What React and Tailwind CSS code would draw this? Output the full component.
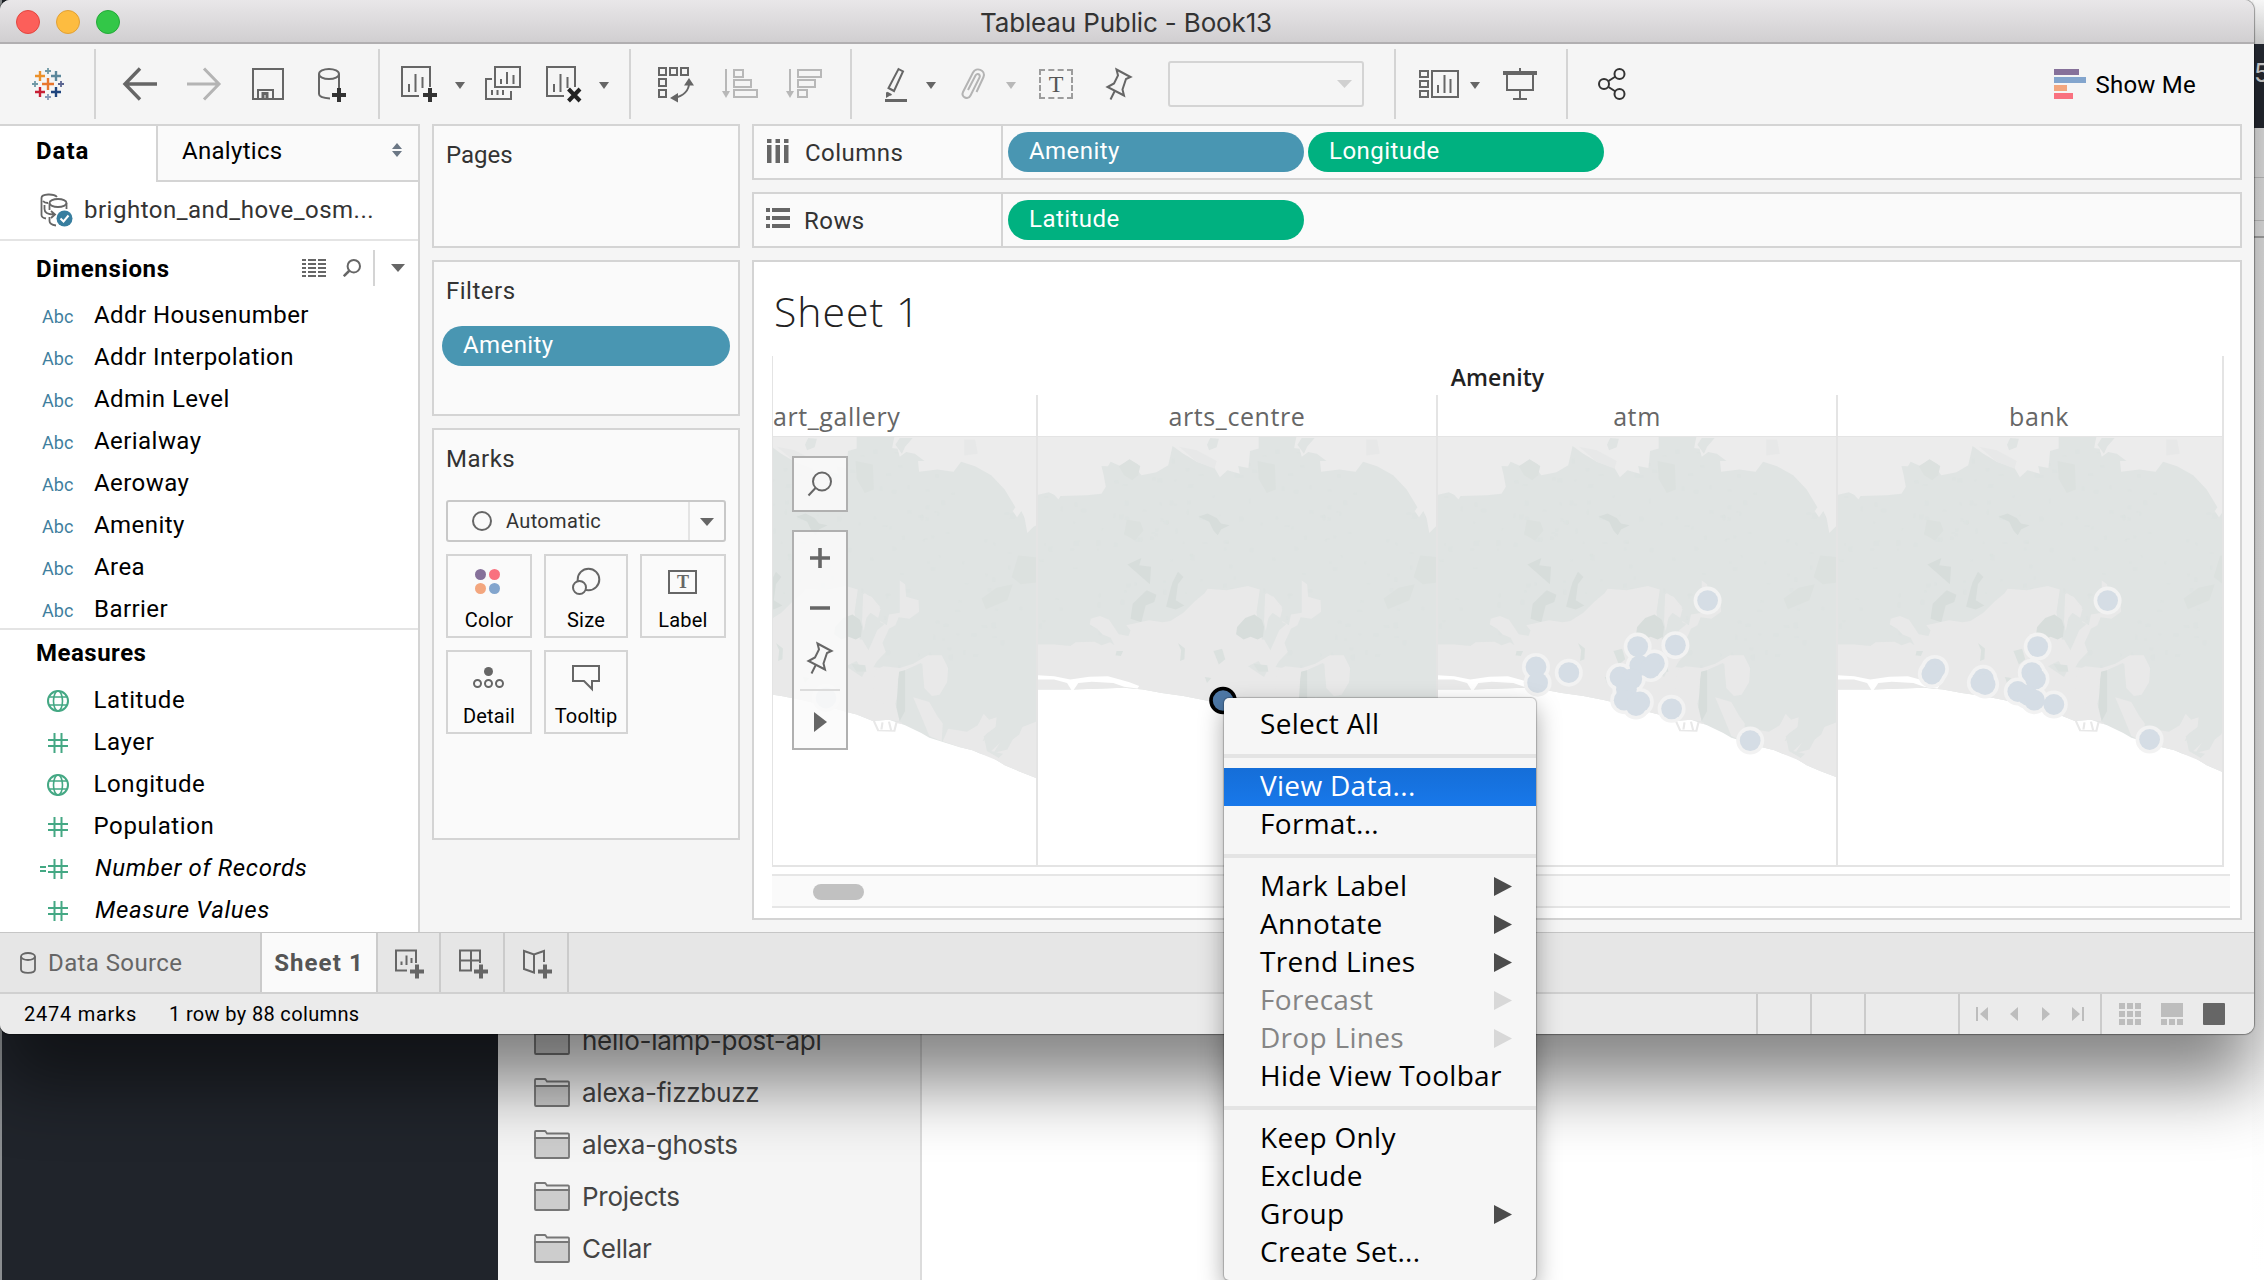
import React from "react";

/* ---------- toolbar icons (each drawn in a 40px tall box) ---------- */

function Icon({ w, className = "", stroke = "#666", sw = 2, children }) {
  return (
    <svg
      width={w}
      height="40"
      viewBox={`0 0 ${w} 40`}
      fill="none"
      stroke={stroke}
      strokeWidth={sw}
      className={`shrink-0 overflow-visible ${className}`}
    >
      {children}
    </svg>
  );
}

function Caret({ className = "", fill = "#666" }) {
  return (
    <svg width="10" height="7" viewBox="0 0 10 7" className={`mt-[2px] shrink-0 ${className}`}>
      <path d="M0 0H10L5 7Z" fill={fill} />
    </svg>
  );
}

const Sep = ({ className = "" }) => (
  <div className={`h-[70px] w-[2px] shrink-0 bg-[#d4d4d4] ${className}`} />
);

const Plus = ({ x, y, s, c, w = 2.4 }) => (
  <path d={`M${x - s} ${y}H${x + s}M${x} ${y - s}V${y + s}`} stroke={c} strokeWidth={w} />
);

const SheetShape = () => (
  <>
    <path d="M30 23V3H2V32H19" />
    <path d="M9 28V20M15.500 28V10M22.500 24V13" />
  </>
);

const PIN = "M10.500 5.500L24.500 13L20 15L16.500 25.500L18 31.500L1.500 23L8 19.500L12 11.500ZM8.500 27.500L4.500 35.500";

function Toolbar() {
  return (
    <div className="flex h-20 shrink-0 items-center bg-[#f5f5f5]">
      <Icon w={32} className="ml-8">
        <Plus x={16} y={20} s={6} c="#e8762d" />
        <Plus x={8} y={12} s={5} c="#eb912b" />
        <Plus x={24} y={12} s={5} c="#5b879b" />
        <Plus x={8} y={28} s={5} c="#c72035" />
        <Plus x={24} y={28} s={5} c="#1f457e" />
        <Plus x={16} y={7} s={3} c="#7199a6" w={1.8} />
        <Plus x={3} y={20} s={3} c="#7199a6" w={1.8} />
        <Plus x={29} y={20} s={3} c="#5b6591" w={1.8} />
        <Plus x={16} y={33} s={3} c="#8398b8" w={1.8} />
      </Icon>
      <Sep className="ml-[30px]" />
      <Icon w={34} className="ml-[27px]" sw={3.4}>
        <path d="M34 20H2M17 4.500L2 20L17 35.500" />
      </Icon>
      <Icon w={34} className="ml-[30px]" sw={3} stroke="#b4b4b4">
        <path d="M0 20H32M17 4.500L32 20L17 35.500" />
      </Icon>
      <Icon w={32} className="ml-[31px]">
        <path d="M1 5H31V35H1ZM6 35V26H21V35" />
        <path d="M11 35V29.500H15V35" strokeWidth="3" />
      </Icon>
      <Icon w={30} className="ml-[34px]">
        <ellipse cx="11" cy="10" rx="10" ry="5" />
        <path d="M1 10V30C1 32.500 5 34 12 34.500M21 10V25" />
        <path d="M14 31H28M21 24V38" stroke="#333" strokeWidth="4" />
      </Icon>
      <Sep className="ml-[30px]" />
      <Icon w={38} className="ml-5">
        <SheetShape />
        <path d="M23 31H37M30 24V38" stroke="#333" strokeWidth="4" />
      </Icon>
      <Caret className="ml-[17px]" />
      <Icon w={36} className="ml-5">
        <path d="M10 3H35V23H10ZM16 20V15M22 20V8M28.500 20V11" />
        <path d="M7 15H1V35H26V27M7 31V26M12.500 31V26M18 31V26" />
      </Icon>
      <Icon w={36} className="ml-6">
        <SheetShape />
        <path d="M23.500 25L35 37M35 25L23.500 37" stroke="#222" strokeWidth="4" />
      </Icon>
      <Caret className="ml-[18px]" />
      <Sep className="ml-5" />
      <Icon w={36} className="ml-[27px]">
        <path d="M1 4H8V11H1ZM12 4H19V11H12ZM23 4H30V11H23ZM1 15H8V22H1ZM1 26H8V33H1Z" />
        <path d="M16 34C26 32 31 26 31 19" />
        <path d="M26 21.500L31 14L36 21.500ZM20 29L12 34L20 38.500Z" fill="#666" stroke="none" />
      </Icon>
      <Icon w={36} className="ml-7" stroke="#b8b8b8">
        <path d="M4 5V30M12 6H21V13H12ZM12 16H29V23H12ZM12 26H35V33H12Z" />
        <path d="M0 27H8L4 34Z" fill="#b8b8b8" stroke="none" />
      </Icon>
      <Icon w={36} className="ml-7" stroke="#b8b8b8">
        <path d="M4 5V30M12 6H35V13H12ZM12 16H29V23H12ZM12 26H21V33H12Z" />
        <path d="M0 27H8L4 34Z" fill="#b8b8b8" stroke="none" />
      </Icon>
      <Sep className="ml-7" />
      <Icon w={24} className="ml-[33px]">
        <path d="M13.500 5L18 7.500L9 27L3.500 24ZM2 28.500L6.500 31" />
        <path d="M0 36.500H22" strokeWidth="3" />
        <path d="M1 28L6 31L1 34Z" fill="#666" stroke="none" />
      </Icon>
      <Caret className="ml-[17px]" />
      <Icon w={24} className="ml-[25px]" stroke="#b4b4b4">
        <path d="M7 26L14.500 11.500C16 8.500 20 10.500 18.500 13.500L9.500 31.500C7 36.500 -0.500 33 2 28L12 8.500C15 2.500 25 6 22.500 13L15.500 28" />
      </Icon>
      <Caret className="ml-[21px]" fill="#b8b8b8" />
      <div className="ml-[23px] flex h-[30px] w-[34px] shrink-0 items-center justify-center border-2 border-dashed border-[#9c9c9c] font-['Liberation_Serif',serif] text-[24px] leading-none text-[#555]">
        T
      </div>
      <Icon w={26} className="ml-[33px]">
        <path d={PIN} />
      </Icon>
      <div className="ml-9 flex h-[46px] w-[196px] shrink-0 items-center justify-end rounded-[3px] border-2 border-[#d4d4d4] pr-[10px]">
        <svg width="15" height="8" viewBox="0 0 15 8">
          <path d="M0 0H15L7.500 8Z" fill="#d0d0d0" />
        </svg>
      </div>
      <Sep className="ml-[30px]" />
      <Icon w={40} className="ml-[23px]">
        <path d="M1 7H9V13H1ZM1 17H9V23H1ZM1 27H9V33H1ZM13 7H39V33H13ZM19 29V21M25.500 29V11M31.500 29V15" />
      </Icon>
      <Caret className="ml-[11px]" />
      <Icon w={34} className="ml-[23px]">
        <path d="M17 4V8M4 10V26H30V10M17 26V35M10 35H24" />
        <path d="M0 9H34" strokeWidth="4" />
      </Icon>
      <Sep className="ml-[29px]" />
      <Icon w={28} className="ml-[30px]" stroke="#333">
        <circle cx="21.500" cy="10" r="5" />
        <circle cx="6" cy="20" r="5" />
        <circle cx="21.500" cy="30" r="5" />
        <path d="M10.500 17L17.500 12.500M10.500 23L17.500 27.500" />
      </Icon>
      <div className="mr-[58px] ml-auto flex items-center">
        <div className="mr-[9px] flex w-8 flex-col gap-[2px]">
          <div className="h-[6px] w-[25px] bg-[#86719a]" />
          <div className="h-[6px] w-8 bg-[#83a5cd]" />
          <div className="h-[6px] w-[13px] bg-[#f3a67e]" />
          <div className="h-[6px] w-[19px] bg-[#f9717f]" />
        </div>
        <span className="pt-px text-[24px] leading-8 tracking-[0.25px] text-black">Show Me</span>
      </div>
    </div>
  );
}

/* ---------- left data pane ---------- */

const DIMENSIONS = [
  "Addr Housenumber",
  "Addr Interpolation",
  "Admin Level",
  "Aerialway",
  "Aeroway",
  "Amenity",
  "Area",
  "Barrier",
];

const MEASURES = [
  ["Latitude", "globe"],
  ["Layer", "hash"],
  ["Longitude", "globe"],
  ["Population", "hash"],
  ["Number of Records", "calc"],
  ["Measure Values", "hash-italic"],
];

function MeasureIcon({ kind }) {
  return (
    <svg width="30" height="24" viewBox="0 0 30 24" fill="none" stroke="#44a884" strokeWidth="2" className="mt-[2px] shrink-0">
      {kind === "globe" ? (
        <>
          <circle cx="18" cy="12" r="10" />
          <ellipse cx="18" cy="12" rx="4.500" ry="10" strokeWidth="1.600" />
          <path d="M9 8H27M9 16H27" strokeWidth="1.600" />
        </>
      ) : (
        <path d="M14.500 2V22M21.500 2V22M8 9H28M8 15H28" />
      )}
      {kind === "calc" && <path d="M0 10H6M0 14H6" />}
    </svg>
  );
}

function DataPane() {
  return (
    <div className="flex w-[420px] shrink-0 flex-col border-t-2 border-r-2 border-[#d4d4d4] bg-white text-[24px] text-black">
      <div className="flex h-14 shrink-0">
        <div className="w-[156px] pl-[36px] font-bold leading-[50px] tracking-[1px]">Data</div>
        <div className="flex flex-1 items-start justify-between border-b-2 border-l-2 border-[#d4d4d4] bg-[#fafafa] pr-4 pl-6 leading-[51px] tracking-[0.3px]">
          Analytics
          <svg width="10" height="14" viewBox="0 0 10 14" className="mt-[17px]">
            <path d="M0 6L5 0L10 6ZM0 8H10L5 14Z" fill="#6b7785" />
          </svg>
        </div>
      </div>
      <div className="flex h-[59px] shrink-0 items-center border-b-2 border-[#e4e4e4] pl-10">
        <svg width="34" height="34" viewBox="0 0 34 34" fill="none" stroke="#666" strokeWidth="1.800" className="mr-[10px] mb-[2px]">
          <path d="M17 4C14 0.500 1.500 0.500 1.500 5V22C1.500 24 3 25 6 25.500" />
          <path d="M3 8C4 9.500 6 10 8 10" />
          <ellipse cx="18" cy="10" rx="8.500" ry="4" />
          <path d="M9.500 10V17M26.500 10V16M9.500 24V28C9.500 31 12 32 16 32.500" />
          <path d="M4.500 12V16C4.500 20 8 21.500 14 21.500M11 18L15 21.500L11 25" />
          <circle cx="24.500" cy="25.500" r="8" fill="#377e9f" stroke="none" />
          <path d="M20.500 25.500L23.500 28.500L28.500 22.500" stroke="#fff" strokeWidth="2" />
        </svg>
        <span className="mb-[2px] leading-[54px] tracking-[0.5px] text-[#333]">brighton_and_hove_osm...</span>
      </div>
      <div className="h-[387px] shrink-0 overflow-hidden">
        <div className="flex h-[54px] items-center pr-[13px] pl-9">
          <span className="flex-1 pt-px font-bold tracking-[0.65px]">Dimensions</span>
          <svg width="24" height="18" viewBox="0 0 24 18" className="mr-[17px]">
            {[0, 4, 8, 12, 16].map((y) => (
              <path key={y} d={`M0 ${y + 1}H4M6 ${y + 1}H14M16 ${y + 1}H24`} stroke="#666" strokeWidth="2" />
            ))}
          </svg>
          <svg width="18" height="18" viewBox="0 0 18 18" fill="none" stroke="#666" strokeWidth="2" className="mr-3">
            <circle cx="10.800" cy="7.200" r="6.200" />
            <path d="M6.500 11.500L0.800 17.200" strokeWidth="2.500" />
          </svg>
          <div className="mr-4 h-9 w-[2px] bg-[#d4d4d4]" />
          <svg width="14" height="8" viewBox="0 0 14 8">
            <path d="M0 0H14L7 8Z" fill="#666" />
          </svg>
        </div>
        {DIMENSIONS.map((d) => (
          <div key={d} className="flex h-[42px] items-baseline leading-[41px]">
            <span className="w-[94px] shrink-0 pl-[42px] text-[18px] tracking-[0.1px] text-[#3f7f9e]">Abc</span>
            <span className="tracking-[0.44px]">{d}</span>
          </div>
        ))}
      </div>
      <div className="flex-1 overflow-hidden border-t-2 border-[#e4e4e4]">
        <div className="h-[49px] pl-9 font-bold leading-[46px] tracking-[0.5px]">Measures</div>
        {MEASURES.map(([name, kind]) => (
          <div key={name} className="flex h-[42px] items-center pl-10">
            <MeasureIcon kind={kind} />
            <span
              className={
                kind === "calc" || kind === "hash-italic"
                  ? "pl-[25px] italic leading-[42px] tracking-[0.65px]"
                  : "pl-[23.500px] leading-[42px] tracking-[0.6px]"
              }
            >
              {name}
            </span>
          </div>
        ))}
      </div>
    </div>
  );
}

/* ---------- cards column ---------- */

const Card = ({ className = "", title, titleClass, children }) => (
  <div className={`shrink-0 border-2 border-[#d4d4d4] bg-[#fafafa] ${className}`}>
    <div className={`pl-3 text-[24px] text-[#333] ${titleClass}`}>{title}</div>
    {children}
  </div>
);

const MARK_ICONS = {
  Color: (
    <g stroke="none">
      <circle cx="11.500" cy="18.500" r="5.500" fill="#86719a" />
      <circle cx="25.500" cy="18.500" r="5.500" fill="#f9717f" />
      <circle cx="11.500" cy="32.500" r="5.500" fill="#f3a67e" />
      <circle cx="25.500" cy="32.500" r="5.500" fill="#83a5cd" />
    </g>
  ),
  Size: (
    <>
      <circle cx="22.500" cy="23.500" r="10.800" />
      <circle cx="13.500" cy="31.500" r="6.500" fill="#fafafa" />
    </>
  ),
  Label: <path d="M6 15H33V37H6Z" />,
  Detail: (
    <>
      <circle cx="19.500" cy="19.500" r="4.500" fill="#666" stroke="none" />
      <circle cx="8.500" cy="31.500" r="3.500" />
      <circle cx="19.500" cy="31.500" r="3.500" />
      <circle cx="30.500" cy="31.500" r="3.500" />
    </>
  ),
  Tooltip: <path d="M7 14H33V29H26V37L18 29H7Z" />,
};

function MarkButton({ name, className }) {
  return (
    <div className={`relative flex h-[84px] flex-col items-center border-2 border-[#d4d4d4] bg-[#fafafa] ${className}`}>
      <svg width="40" height="52" viewBox="0 0 40 52" fill="none" stroke="#666" strokeWidth="2">
        {MARK_ICONS[name]}
      </svg>
      {name === "Label" && (
        <span className="absolute top-[16px] font-['Liberation_Serif',serif] text-[18px] font-bold leading-[20px] text-[#666]">T</span>
      )}
      <span className="text-[20px] leading-[25px] tracking-[0.2px] text-black">{name}</span>
    </div>
  );
}

function Cards() {
  return (
    <div className="ml-3 flex w-[308px] shrink-0 flex-col gap-3">
      <Card className="h-[124px]" title="Pages" titleClass="leading-[58px]" />
      <Card className="h-[156px]" title="Filters" titleClass="h-16 leading-[59px] tracking-[0.5px]">
        <div className="mx-2 h-10 rounded-full bg-[#4996b2] pl-[21px] text-[24px] leading-[39px] tracking-[0.4px] text-white">
          Amenity
        </div>
      </Card>
      <Card className="h-[412px]" title="Marks" titleClass="h-[70px] leading-[59px] tracking-[0.5px]">
        <div className="mx-3 flex h-[42px] items-center rounded-[3px] border-2 border-[#c8c8c8]">
          <svg width="20" height="20" viewBox="0 0 20 20" className="ml-6">
            <circle cx="10" cy="10" r="9" fill="none" stroke="#666" strokeWidth="2" />
          </svg>
          <span className="flex-1 pl-[14px] text-[20px] tracking-[0.35px] text-[#333]">Automatic</span>
          <div className="flex h-full w-[36px] items-center justify-center border-l-2 border-[#e4e4e4]">
            <svg width="14" height="8" viewBox="0 0 14 8" className="mt-[2px]">
              <path d="M0 0H14L7 8Z" fill="#666" />
            </svg>
          </div>
        </div>
        <div className="mx-3 mt-3 flex flex-wrap gap-y-3">
          <MarkButton name="Color" className="w-[86px]" />
          <MarkButton name="Size" className="ml-3 w-[84px]" />
          <MarkButton name="Label" className="ml-3 w-[86px]" />
          <MarkButton name="Detail" className="w-[86px]" />
          <MarkButton name="Tooltip" className="ml-3 w-[84px]" />
        </div>
      </Card>
    </div>
  );
}

/* ---------- shelves ---------- */

const Pill = ({ color, children }) => (
  <div className={`h-10 w-[296px] rounded-full pl-[21px] text-[24px] leading-[39px] tracking-[0.45px] text-white ${color}`}>
    {children}
  </div>
);

const Shelf = ({ icon, label, children }) => (
  <div className="flex h-14 shrink-0 border-2 border-[#d4d4d4] bg-[#fafafa]">
    <div className="flex w-[249px] items-center border-r-2 border-[#d4d4d4]">
      {icon}
      <span className="pt-px text-[24px] tracking-[0.45px] text-[#333]">{label}</span>
    </div>
    <div className="flex items-center gap-1 pl-[5px]">{children}</div>
  </div>
);

/* ---------- map ---------- */

function seeded(seed) {
  let s = seed;
  return () => {
    s = (s * 16807) % 2147483647;
    return s / 2147483647;
  };
}

const rnd = seeded(42);
const SPECKS = Array.from({ length: 240 }, () => ({
  x: 32 + rnd() * 735,
  y: 500 + rnd() * 640,
  w: 3 + rnd() * 7,
  h: 4 + rnd() * 12,
}));

const LAND = "#e0e4e3";
const URBAN = "#e9e9e9";
const PALE = "#ececec";
const WOOD = "#d7dddb";

function MapTile() {
  return (
    <svg width="400" height="430" viewBox="30 493 743.200 1204" preserveAspectRatio="none" className="block shrink-0">
      <rect x="30" y="493" width="744" height="1204" fill="#fff" />
      <path
        fill={LAND}
        d="M30 493H774V1448L740 1428L715 1412L700 1398L690 1388L670 1380L655 1370L632 1362L606 1350L590 1342L575 1335L560 1322L530 1300L500 1285L470 1288L440 1270L420 1262L380 1245L340 1230L300 1218L260 1210L225 1200L190 1195L95 1200L30 1200Z"
      />
      {SPECKS.map((s, i) => (
        <rect key={i} x={s.x} y={s.y} width={s.w} height={s.h} rx="2" fill="#dce2e0" opacity="0.450" />
      ))}
      <path
        fill={PALE}
        d="M30 493H440V525L424 532L421 580L402 574L405 596L382 586L368 606L358 580L325 562L300 540L280 518L272 572L250 592L222 600L214 585L216 570L200 556L184 575L165 562L160 575L148 574L152 600L156 632L148 652L120 656L72 658L68 668L60 655L50 648L30 655Z"
      />
      <path fill={PALE} d="M510 493H774V740L768 745L757 762L752 720L746 700L738 718L730 700L735 690L715 640L690 600L660 575L634 562L620 590L590 584L556 590L554 560L566 560L548 540L532 535L520 548L516 526L506 524Z" />
      <path fill="#e7e8e8" d="M292 520L325 530L362 560L358 582L325 562ZM640 500L660 500L665 540L640 545Z" />
      <path fill={LAND} d="M350 496L366 498L362 522L348 530L344 515ZM520 496H544L530 520L524 540L512 515Z" />
      <path fill="#dce1df" d="M180 575L200 555L220 574L216 600L205 614L190 600ZM195 725L220 730L226 755L210 783L190 765ZM438 560L470 570L472 640L455 650L440 610ZM740 825L774 830V900L745 905L728 885ZM700 915L730 905L720 950L680 975L672 945Z" />
      <path fill={WOOD} d="M328 716L345 707L362 720L370 735L386 740L370 752L364 768L356 755L348 730ZM196 850L222 832L218 852L240 856L238 905ZM232 922L250 935L246 955L230 965L222 1012L202 1002L206 960ZM290 870L300 885L290 905L286 950L302 965L286 976L268 968L276 920L280 900Z" />
      <path
        fill={URBAN}
        d="M30 1074L60 1074L90 1078L100 1068L135 1066L148 1076L164 1068L172 1076L165 1055L150 1046L140 1030L126 1018L128 1002L145 994L162 1005L168 1018L180 1045L198 1050L202 1035L194 1020L236 1006L262 1012L276 1008L300 985L320 955L340 930L345 918L380 922L420 910L442 920L436 985L455 930L470 945L484 970L476 1000L496 1020L500 990L520 985L520 895L530 905L532 940L555 950L556 982L538 1002L518 998L512 1020L500 1030L488 1070L494 1095L478 1120L470 1140L452 1150L440 1120L420 1135L450 1165L460 1135L510 1145L545 1128L572 1104L598 1104L610 1140L608 1180L594 1215L580 1218L565 1195L562 1128L520 1152L518 1200L512 1240L520 1290L500 1285L470 1288L440 1270L420 1262L380 1245L340 1230L300 1218L260 1210L225 1200L190 1195L95 1200L30 1200Z"
      />
      <path fill={LAND} d="M444 920L452 935L450 1010L456 1060L446 1060L436 985ZM484 970L484 1012L492 1016L478 1035L462 1090L450 1060L458 1000L466 985Z" />
      <path fill={URBAN} d="M452 932L468 940L484 975L480 1000L466 985L452 965Z" />
      <path fill={WOOD} d="M400 1025L415 1000L432 990L446 1005L450 1025L448 1052L438 1060L425 1052L412 1060L398 1045ZM518 1150L530 1146L536 1200L530 1260L520 1288L514 1250Z" />
      <path fill={LAND} d="M530 1146L560 1125L566 1200L580 1230L545 1222L552 1255L530 1285Z" />
      <path fill="#dbe1df" d="M290 1070L303 1085L302 1115L294 1120L296 1090ZM176 1092L188 1092L184 1106L174 1104ZM356 1092L372 1086L378 1115L366 1130ZM340 1165L352 1168L344 1182ZM430 1128L456 1132L458 1150L440 1150Z" />
      <path fill={URBAN} d="M490 1135L520 1140L512 1215L490 1240L470 1225L475 1145ZM545 1222L575 1235L590 1275L600 1295L598 1345L575 1330L560 1275ZM600 1345L610 1310L645 1318L665 1300L676 1268L686 1285L700 1278L698 1305L680 1325L674 1345L710 1318L706 1350L694 1378L720 1368L730 1340L742 1326L748 1305L774 1290V1448L740 1428L715 1412L700 1398L655 1370L632 1362Z" />
      <path fill={LAND} d="M676 1330L712 1312L710 1345L690 1372L712 1380L704 1392L682 1372Z" />
      <path fill="#fff" d="M30 1160L60 1163L90 1172L125 1164L160 1163L182 1172L200 1180L218 1190L215 1197L190 1192L170 1182L130 1178L105 1182L94 1206L84 1182L60 1172L30 1172Z" />
      <path d="M472 1288L480 1315L510 1316L514 1292L524 1295M488 1292L486 1312M500 1290L504 1314" fill="none" stroke="#e8e8e8" strokeWidth="4" />
    </svg>
  );
}

const ATM = [
  [269.6, 163.6], [237.4, 208.2], [199.7, 209.6], [216.4, 226.4], [201.8, 228.6], [212.6, 231], [98, 230],
  [99.6, 245.7], [130.8, 235.7], [182, 240], [193.8, 241.8], [188.4, 252.5], [186.2, 263.2], [201.8, 265],
  [198, 268.6], [233.6, 271.8], [312.2, 303.6],
];
const BANK = [
  [269.6, 163.6], [199.7, 209.6], [96.9, 232], [93.9, 237], [145.3, 241.8], [142.9, 245.7], [147.1, 247.5],
  [193.8, 235.7], [197.5, 241.8], [179.8, 254.5], [189.5, 258], [196.4, 263.2], [215.8, 267.5], [311.6, 302.5],
];

function Facet({ marks = [], className = "", children }) {
  return (
    <div className={`relative flex overflow-hidden ${className}`}>
      <MapTile />
      <svg width="400" height="430" viewBox="0 0 400 430" className="absolute top-0 left-0">
        {marks.map(([x, y], i) => (
          <circle key={i} cx={x} cy={y} r="14" fill="#f2f2f2" />
        ))}
        {marks.map(([x, y], i) => (
          <circle key={i} cx={x} cy={y} r="10.400" fill="#d5dde5" />
        ))}
        {children}
      </svg>
    </div>
  );
}

const VLINE = "border-l-2 border-[#e4e4e4]";

function Worksheet() {
  return (
    <div className="flex h-[660px] shrink-0 flex-col border-2 border-[#d4d4d4] bg-white font-['Open_Sans','Noto_Sans',sans-serif]">
      <div className="mt-[19px] h-[75px] pl-[20px] text-[41px] font-light leading-[60px] tracking-[1px] text-[#222]">Sheet 1</div>
      <div className="relative ml-[18px] w-[1452px] shrink-0">
        <div className="h-[39px] border-r-2 border-l border-[#e4e4e4] text-center text-[23px] font-semibold leading-[42px] tracking-[0.1px] text-[#222]">
          Amenity
        </div>
        <div className="flex h-[42px] border-l border-b border-[#e4e4e4] text-[25px] leading-[43px] tracking-[0.6px] text-[#666]">
          <div className="w-[263px]">art_gallery</div>
          <div className={`w-[400px] text-center ${VLINE}`}>arts_centre</div>
          <div className={`w-[400px] text-center ${VLINE}`}>atm</div>
          <div className={`w-[388px] border-r-2 pl-[171px] ${VLINE}`}>bank</div>
        </div>
        <div className="flex h-[430px] border-b-2 border-[#e4e4e4]">
          <div className="flex w-[264px] justify-end overflow-hidden border-l border-[#e4e4e4]">
            <Facet className="w-[400px] shrink-0" marks={[[190, 261]]} />
          </div>
          <Facet className={`w-[400px] ${VLINE}`}>
            <circle cx="185" cy="263.500" r="12" fill="#4e79a7" stroke="#000" strokeWidth="3.600" />
          </Facet>
          <Facet className={`w-[400px] ${VLINE}`} marks={ATM} />
          <Facet className={`w-[388px] border-r-2 ${VLINE}`} marks={BANK} />
        </div>
        <div className="absolute top-[100px] left-5 flex w-14 flex-col gap-[18px]">
          <div className="flex h-14 items-center justify-center border-2 border-[#b0b0b0] bg-[#fafafa]/85">
            <svg width="26" height="26" viewBox="0 0 26 26" fill="none" stroke="#666" strokeWidth="2">
              <circle cx="15" cy="10.500" r="9" />
              <path d="M8.500 17L1.500 24.500" />
            </svg>
          </div>
          <div className="flex h-[220px] flex-col items-center border-2 border-[#b0b0b0] bg-[#fafafa]/85">
            <svg width="52" height="216" viewBox="0 0 52 216" fill="none" stroke="#666">
              <path d="M16 26H36M26 16V36M16 76H36" strokeWidth="3.600" />
              <path d={PIN} transform="translate(13 106)" strokeWidth="2" />
              <path d="M6 158H46" stroke="#dcdcdc" strokeWidth="2" />
              <path d="M20 180L33 190L20 200Z" fill="#666" stroke="none" />
            </svg>
          </div>
        </div>
      </div>
      <div className="mt-[7px] ml-[18px] flex h-[34px] w-[1458px] shrink-0 items-center border-y-2 border-[#e6e6e6] bg-[#fafafa] pl-[41px]">
        <div className="mt-px h-4 w-[51px] rounded-full bg-[#c1c1c1]" />
      </div>
    </div>
  );
}

/* ---------- bottom bars ---------- */

const TabPlus = () => <path d="M15 22.500H29M22 15.500V29.500" strokeWidth="4" />;

function BottomBars() {
  const cell = "flex h-full items-center justify-center border-r-2 border-[#cbcbcb] pt-[2px] pl-[3px]";
  return (
    <>
      <div className="flex h-[62px] shrink-0 border-t border-b-2 border-t-[#c6c6c6] border-b-[#d0d0d0] bg-[#e6e6e6] text-[24px] text-[#666]">
        <div className="flex w-[262px] items-center border-r-2 border-[#cbcbcb] pl-5">
          <svg width="16" height="22" viewBox="0 0 16 22" fill="none" stroke="#666" strokeWidth="1.800" className="mr-3">
            <ellipse cx="8" cy="4.500" rx="7" ry="3.500" />
            <path d="M1 4.500V17.500C1 22 15 22 15 17.500V4.500" />
          </svg>
          <span className="pt-px tracking-[0.4px]">Data Source</span>
        </div>
        <div className="flex w-[116px] items-center justify-center border-r-2 border-[#cbcbcb] bg-[#fafafa] font-bold tracking-[1.1px] text-[#555]">
          Sheet 1
        </div>
        <div className={`w-[63px] ${cell}`}>
          <svg width="30" height="30" viewBox="0 0 30 30" fill="none" stroke="#666" strokeWidth="2">
            <path d="M21 14V1.500H1V21.500H12M6.500 16V12.500M11.500 16V6.500M16.500 14V9" />
            <TabPlus />
          </svg>
        </div>
        <div className={`w-[64px] ${cell}`}>
          <svg width="30" height="30" viewBox="0 0 30 30" fill="none" stroke="#666" strokeWidth="2">
            <path d="M21 14V1.500H1V21.500H12V1.500M1 11.500H21" />
            <TabPlus />
          </svg>
        </div>
        <div className={`w-[64px] ${cell}`}>
          <svg width="30" height="30" viewBox="0 0 30 30" fill="none" stroke="#666" strokeWidth="2">
            <path d="M21 13V2L11 5.500L1 2V20L11 23.500V5.500" />
            <TabPlus />
          </svg>
        </div>
      </div>
      <div className="flex h-10 shrink-0 items-center bg-[#ebebeb] text-[20px] text-black">
        <span className="ml-6 w-[145px] tracking-[0.75px]">2474 marks</span>
        <span className="flex-1 tracking-[0.35px]">1 row by 88 columns</span>
        <div className="h-full w-[54px] border-l-2 border-[#cbcbcb]" />
        <div className="h-full w-[54px] border-l-2 border-[#cbcbcb]" />
        <div className="h-full w-[94px] border-l-2 border-[#cbcbcb]" />
        <div className="flex h-full w-[142px] items-center border-l-2 border-[#cbcbcb] pl-[16px]">
          <svg width="110" height="14" viewBox="0 0 110 14" fill="#bdbdbd">
            <path d="M0 0H2V14H0ZM12 0V14L4 7ZM42 0V14L34 7ZM66 0V14L74 7ZM96 0V14L104 7ZM106 0H108V14H106Z" />
          </svg>
        </div>
        <div className="flex h-full w-[154px] items-center gap-5 border-l-2 border-[#cbcbcb] pl-[17px]">
          <svg width="22" height="22" viewBox="0 0 22 22" fill="#bdbdbd">
            {[0, 8, 16].map((y) => (
              <path key={y} d={`M0 ${y}h6v6h-6zM8 ${y}h6v6h-6zM16 ${y}h6v6h-6z`} />
            ))}
          </svg>
          <svg width="22" height="22" viewBox="0 0 22 22" fill="#bdbdbd">
            <path d="M0 0h22v14h-22zM0 16h6v6h-6zM8 16h6v6h-6zM16 16h6v6h-6z" />
          </svg>
          <div className="size-[22px] rounded-[1px] bg-[#666]" />
        </div>
      </div>
    </>
  );
}

/* ---------- context menu ---------- */

const MENU = [
  [{ t: "Select All" }],
  [{ t: "View Data...", active: true }, { t: "Format..." }],
  [
    { t: "Mark Label", sub: true },
    { t: "Annotate", sub: true },
    { t: "Trend Lines", sub: true },
    { t: "Forecast", sub: true, off: true },
    { t: "Drop Lines", sub: true, off: true },
    { t: "Hide View Toolbar" },
  ],
  [{ t: "Keep Only" }, { t: "Exclude" }, { t: "Group", sub: true }, { t: "Create Set..." }],
];

function ContextMenu() {
  return (
    <div className="absolute top-[698px] left-[1224px] w-[312px] overflow-hidden rounded-[5px] bg-[#f6f6f6] py-2 font-['Open_Sans','Noto_Sans',sans-serif] text-[28px] font-medium tracking-[0.3px] shadow-[0_0_1px_1px_rgba(0,0,0,0.22),0_10px_24px_rgba(0,0,0,0.35)]">
      {MENU.map((group, g) => (
        <div key={g}>
          {g > 0 && <div className="mt-[10px] mb-[10px] h-1 bg-[#e4e4e4]" />}
          {group.map((m) => (
            <div
              key={m.t}
              className={`flex h-[38px] justify-between pr-6 pl-9 leading-[34px] ${
                m.active
                  ? "bg-linear-to-b from-[#156ed8] to-[#1878ea] text-white"
                  : m.off
                    ? "text-[#858585]"
                    : "text-black"
              }`}
            >
              <span className="whitespace-nowrap">{m.t}</span>
              {m.sub && (
                <svg width="18" height="19" viewBox="0 0 18 19" className="mt-[9px] shrink-0">
                  <path d="M0 0L18 9.500L0 19Z" fill={m.off ? "#d8d8d8" : "#4c4c4c"} />
                </svg>
              )}
            </div>
          ))}
        </div>
      ))}
    </div>
  );
}

/* ---------- windows behind ---------- */

const FOLDERS = ["hello-lamp-post-api", "alexa-fizzbuzz", "alexa-ghosts", "Projects", "Cellar"];

function Backdrop() {
  return (
    <div className="flex h-[1280px] w-[2264px] bg-white">
      <div className="w-[498px] border-l-2 border-[#8a8d90] bg-[#20242b]" />
      <div className="w-[424px] border-r-2 border-[#dcdcdc] bg-[#f5f5f5] pt-[1014px] font-['Inter',sans-serif] text-[26px] tracking-[-0.25px] text-[#444]">
        {FOLDERS.map((f) => (
          <div key={f} className="flex h-[52px] items-center pl-9">
            <svg width="36" height="29" viewBox="0 0 36 29" className="mr-3 shrink-0">
              <path d="M1 8V2Q1 1 2 1H10.500Q11.500 1 12 2L13 3.500H34Q35 3.500 35 4.500V8Z" fill="#ececec" stroke="#777" strokeWidth="1.800" />
              <path d="M1 8.500Q1 8 2 8H34Q35 8 35 8.500V27Q35 28 34 28H2Q1 28 1 27Z" fill="#cdcdcd" stroke="#777" strokeWidth="1.800" />
            </svg>
            {f}
          </div>
        ))}
      </div>
      <div className="ml-auto flex w-3 flex-col bg-linear-to-b from-[#f4f4f4] to-white pl-[2px]">
        <div className="h-11 bg-linear-to-b from-[#fafafa] to-[#d8d8d8]" />
        <div className="h-[84px] overflow-hidden bg-[#262a33] pt-[12px] font-['Inter',sans-serif] text-[26px] leading-[34px] text-[#ddd]">5</div>
        <div className="mt-[49px] h-px bg-[#cfcfcf]" />
        <div className="mt-[42px] h-px bg-[#cfcfcf]" />
        <div className="mt-[15px] h-[2px] bg-[#b0b0b0]" />
      </div>
    </div>
  );
}

export default function App() {
  return (
    <div className="relative h-[1280px] w-[2264px] overflow-hidden font-['Roboto',sans-serif]">
      <Backdrop />
      <div className="absolute top-0 left-0 flex h-[1034px] w-[2254px] flex-col overflow-hidden rounded-[10px] bg-[#f5f5f5] shadow-[0_0_1px_1px_rgba(0,0,0,0.35),0_50px_70px_rgba(0,0,0,0.48)]">
        <div className="grid h-11 shrink-0 grid-cols-[1fr_auto_1fr] items-center border-b-2 border-[#b1afb1] bg-linear-to-b from-[#e9e7e9] to-[#d1cfd1]">
          <div className="flex gap-4 pt-[2px] pl-4">
            <div className="size-6 rounded-full border border-[#e2463f] bg-[#fc5f5a]" />
            <div className="size-6 rounded-full border border-[#e1a035] bg-[#fdbc40]" />
            <div className="size-6 rounded-full border border-[#24a939] bg-[#33c748]" />
          </div>
          <div className="pt-[4px] pr-[2px] font-['Inter',sans-serif] text-[26px] leading-[38px] tracking-[-0.15px] text-[#333]">
            Tableau Public - Book13
          </div>
          <div />
        </div>
        <Toolbar />
        <div className="flex h-[808px] shrink-0">
          <DataPane />
          <Cards />
          <div className="ml-3 flex w-[1490px] flex-col gap-3">
            <Shelf
              label="Columns"
              icon={
                <svg width="22" height="24" viewBox="0 0 22 24" fill="#666" className="mr-[16px] mb-[2px] ml-[13px]">
                  <path d="M0 0h4.500v4h-4.500zM8.500 0h4.500v4h-4.500zM17 0h4.500v4h-4.500zM0 6h4.500v18h-4.500zM8.500 6h4.500v18h-4.500zM17 6h4.500v18h-4.500z" />
                </svg>
              }
            >
              <Pill color="bg-[#4996b2]">Amenity</Pill>
              <Pill color="bg-[#00b180]">Longitude</Pill>
            </Shelf>
            <Shelf
              label="Rows"
              icon={
                <svg width="24" height="20" viewBox="0 0 24 20" fill="#666" className="mr-[14px] mb-1 ml-3">
                  <path d="M0 0h4v4h-4zM0 8h4v4h-4zM0 16h4v4h-4zM6 0h18v4h-18zM6 8h18v4h-18zM6 16h18v4h-18z" />
                </svg>
              }
            >
              <Pill color="bg-[#00b180]">Latitude</Pill>
            </Shelf>
            <Worksheet />
          </div>
        </div>
        <BottomBars />
      </div>
      <ContextMenu />
    </div>
  );
}
